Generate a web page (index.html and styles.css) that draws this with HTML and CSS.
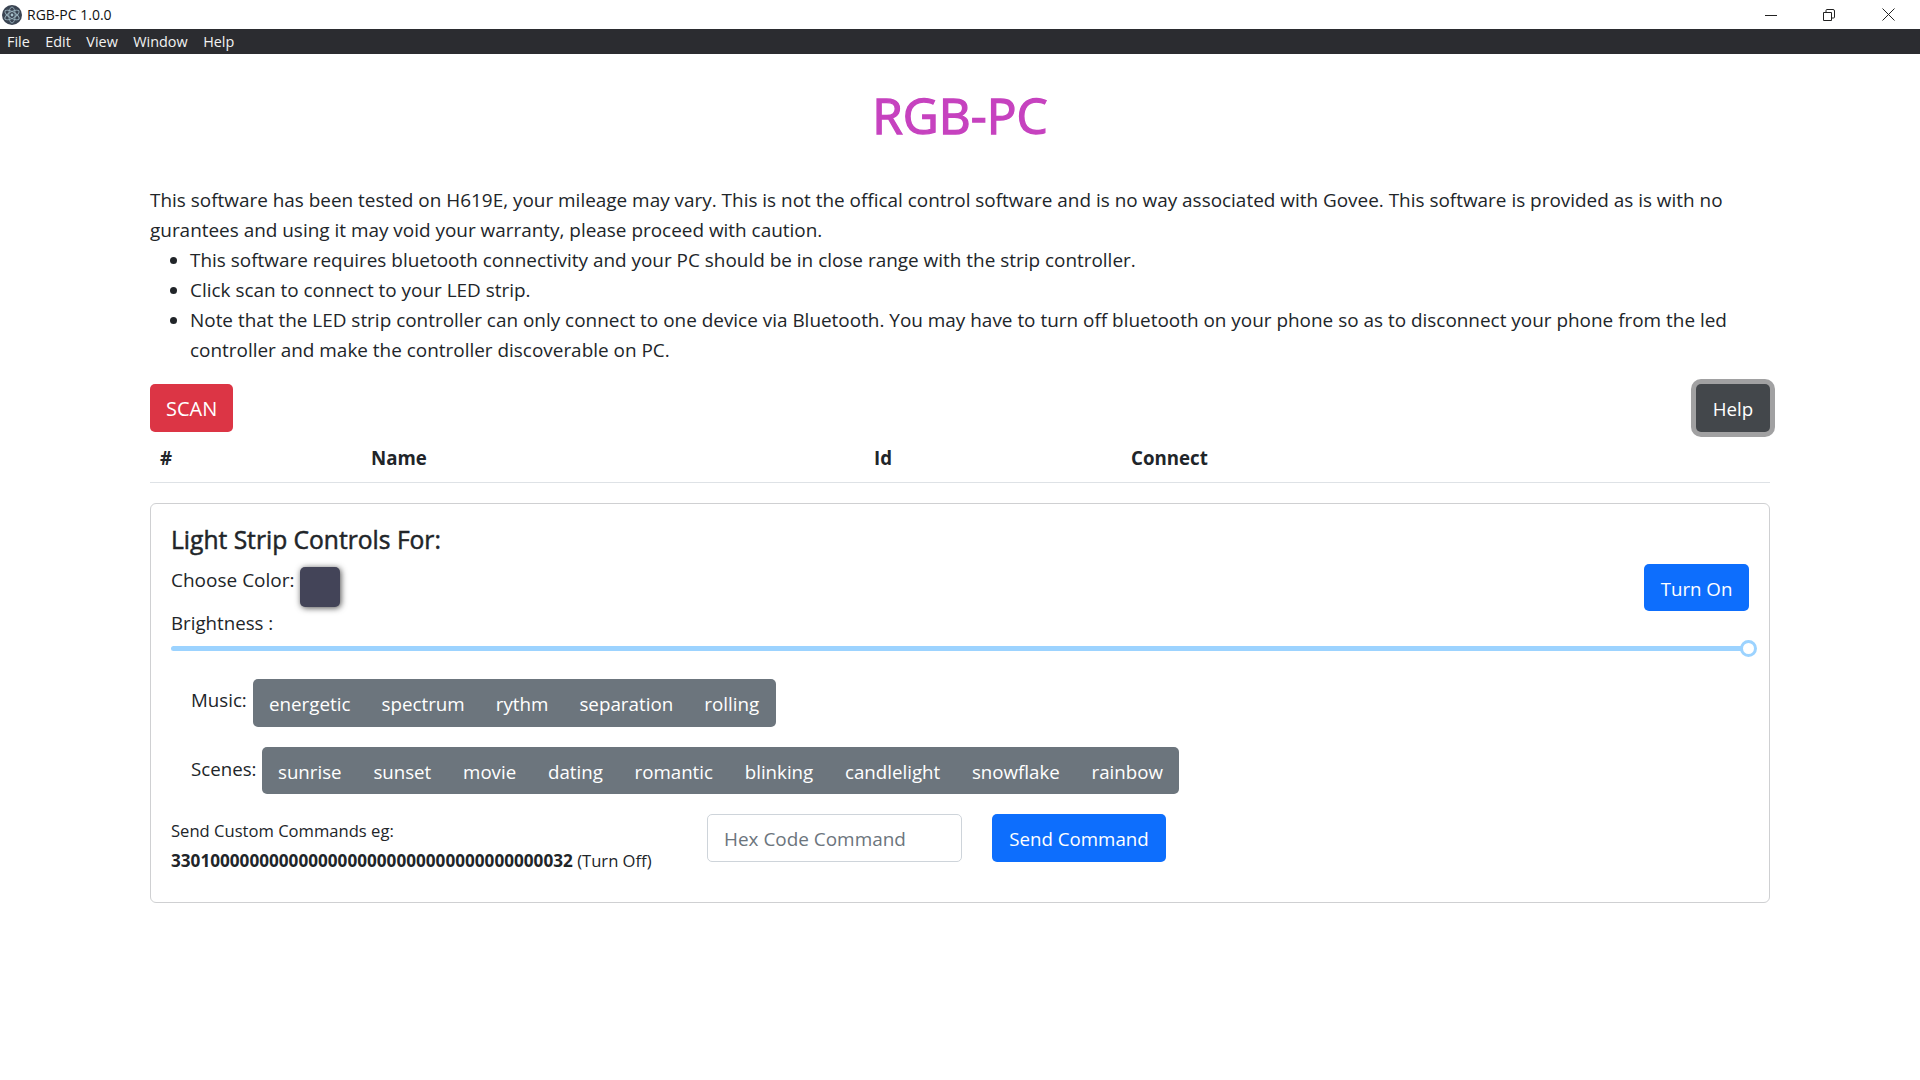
FILE: index.html
```html
<!DOCTYPE html>
<html lang="en">
<head>
<meta charset="utf-8">
<title>RGB-PC 1.0.0</title>
<link rel="stylesheet" href="styles.css">
</head>
<body>
<header class="titlebar">
  <svg class="app-icon" width="20" height="20" viewBox="0 0 20 20"><circle cx="10" cy="10" r="10" fill="#3a4452"/><g fill="none" stroke="#a9c4cf" stroke-width="0.9" opacity=".85"><ellipse cx="10" cy="10" rx="8" ry="3.2" transform="rotate(30 10 10)"/><ellipse cx="10" cy="10" rx="8" ry="3.2" transform="rotate(90 10 10)"/><ellipse cx="10" cy="10" rx="8" ry="3.2" transform="rotate(150 10 10)"/></g><circle cx="10" cy="10" r="1.4" fill="#a9c4cf"/></svg>
  <span class="app-title">RGB-PC 1.0.0</span>
  <div class="win-controls">
    <svg class="win-btn win-min" width="12" height="12" viewBox="0 0 12 12"><path d="M0 6.500h12" stroke="#222" fill="none"/></svg>
    <svg class="win-btn win-max" width="12" height="12" viewBox="0 0 12 12"><path d="M.5 3.500h8v8h-8zM3 3.500V1.500q0-1 1-1h6q1.500 0 1.500 1.500v6q0 1-1 1H8.500" stroke="#222" fill="none"/></svg>
    <svg class="win-btn win-close" width="13" height="13" viewBox="0 0 13 13"><path d="M.5.5l12 12M12.500.5L.5 12.500" stroke="#222" fill="none"/></svg>
  </div>
</header>
<nav class="menubar"><span>File</span><span>Edit</span><span>View</span><span>Window</span><span>Help</span></nav>
<main class="container">
  <h1 class="page-title">RGB-PC</h1>
  <p class="intro">This software has been tested on H619E, your mileage may vary. This is not the offical control software and is no way associated with Govee. This software is provided as is with no gurantees and using it may void your warranty, please proceed with caution.</p>
  <ul class="notes">
    <li>This software requires bluetooth connectivity and your PC should be in close range with the strip controller.</li>
    <li>Click scan to connect to your LED strip.</li>
    <li>Note that the LED strip controller can only connect to one device via Bluetooth. You may have to turn off bluetooth on your phone so as to disconnect your phone from the led controller and make the controller discoverable on PC.</li>
  </ul>
  <div class="actions">
    <button class="btn btn-red">SCAN</button>
    <button class="btn btn-dark">Help</button>
  </div>
  <div class="table-head">
    <span class="col-num">#</span><span class="col-name">Name</span><span class="col-id">Id</span><span>Connect</span>
  </div>
  <section class="card">
    <h5 class="card-title">Light Strip Controls For:</h5>
    <div class="top-row">
      <div class="top-left">
        <div class="color-row"><span>Choose Color:</span><span class="swatch"></span></div>
        <div class="brightness">Brightness :</div>
      </div>
      <button class="btn btn-blue turn-on">Turn On</button>
    </div>
    <div class="slider"><span class="thumb"></span></div>
    <div class="group-row music"><span class="group-label">Music:</span>
      <div class="group"><span>energetic</span><span>spectrum</span><span>rythm</span><span>separation</span><span>rolling</span></div>
    </div>
    <div class="group-row scenes"><span class="group-label">Scenes:</span>
      <div class="group"><span>sunrise</span><span>sunset</span><span>movie</span><span>dating</span><span>romantic</span><span>blinking</span><span>candlelight</span><span>snowflake</span><span>rainbow</span></div>
    </div>
    <div class="custom">
      <div class="custom-text">
        <div>Send Custom Commands eg:</div>
        <div><b class="hex-sample">33010000000000000000000000000000000000032</b> (Turn Off)</div>
      </div>
      <input class="hex" placeholder="Hex Code Command">
      <button class="btn btn-blue send">Send Command</button>
    </div>
  </section>
</main>
</body>
</html>
```
FILE: styles.css
```css
* { box-sizing: border-box; }
html, body { margin: 0; height: 100%; overflow: hidden; }
body { font-family: "Open Sans", "Liberation Sans", sans-serif; font-size: 18.7px; line-height: 30px; color: #212529; background: #fff; }
.titlebar { height: 29px; display: flex; align-items: center; padding-left: 2px; font-size: 14px; color: #111; }
.app-icon { margin-right: 5px; }
.win-controls { margin-left: auto; display: flex; align-items: center; padding-right: 25px; }
.win-btn { display: block; }
.win-max { margin: 0 47px 0 46px; }
.menubar { height: 25px; background: #2b2c30; color: #f2f2f2; display: flex; align-items: center; padding-left: 7px; gap: 15.5px; font-size: 14.4px; line-height: 25px; }
.container { padding: 0 150px; }
.page-title { margin: 31px 0 0; height: 60px; line-height: 60px; text-align: center; font-size: 49.5px; font-weight: 500; color: #c642bf; -webkit-text-stroke: 1.3px #c642bf; }
.intro { margin: 40px 0 0; font-size: 18.93px; }
.notes { margin: 0; padding-left: 40px; font-size: 18.93px; }
.actions { display: flex; justify-content: space-between; margin-top: 19px; }
.btn { height: 48px; border: 0; border-radius: 5px; padding: 2px 16px 0; font: inherit; color: #fff; }
.btn-red { background: #dc3545; width: 83px; font-size: 20px; }
.btn-dark { background: #43474b; width: 74px; box-shadow: 0 0 0 5px #a1a1a2; }
.btn-blue { background: #0d6efd; }
.table-head { display: flex; height: 51px; padding: 11px 0 0 10px; border-bottom: 1px solid #dee2e6; font-weight: 700; }
.col-num { width: 211px; }
.col-name { width: 503px; }
.col-id { width: 257px; }
.card { margin-top: 20px; height: 400px; border: 1px solid #cfd0d2; border-radius: 6px; padding: 20px 20px 0; }
.card-title { margin: 0; font-size: 24.6px; font-weight: 500; line-height: 32px; -webkit-text-stroke: 0.5px #212529; }
.top-row { display: flex; justify-content: space-between; }
.top-left { flex: 1; }
.color-row { display: flex; gap: 5px; height: 46px; margin-top: 11px; font-size: 19px; }
.color-row span:first-child { margin-top: -2px; }
.swatch { width: 40px; height: 40px; border-radius: 5px; background: #434458; box-shadow: 1px 1px 6px rgba(0,0,0,.7); }
.brightness { margin-top: -5px; }
.turn-on { width: 105px; height: 47px; margin-top: 8px; }
.slider { position: relative; height: 5px; margin: 8px 0 0; border-radius: 3px; background: #9cd3ff; width: 1577px; }
.thumb { position: absolute; right: -9px; top: -6px; width: 17px; height: 17px; border-radius: 50%; background: #fff; border: 3px solid #9cd3ff; }
.group-row { display: flex; }
.group-label { padding: 6px 0 0 20px; }
.music { margin-top: 28px; }
.scenes { margin-top: 20px; }
.music .group-label { width: 82px; }
.scenes .group-label { width: 91px; padding-top: 7px; }
.group { display: flex; height: 48px; background: #6c757d; color: #fff; border-radius: 5px; padding: 2px 16px 0; gap: 31px; align-items: center; font-size: 18.8px; }
.music .group { width: 523px; }
.scenes .group { height: 47px; gap: 31.8px; font-size: 18.7px; }
.custom { display: flex; margin-top: 20px; align-items: flex-start; }
.custom-text { width: 536px; font-size: 16.6px; margin-top: 2px; }
.hex-sample { font-size: 17.15px; }
.hex { width: 255px; height: 48px; border: 1px solid #ced4da; border-radius: 5px; padding: 2px 16px 0; font: inherit; font-size: 18.93px; color: #212529; }
.hex::placeholder { color: #6c757d; }
.send { margin-left: 30px; width: 174px; }
```
